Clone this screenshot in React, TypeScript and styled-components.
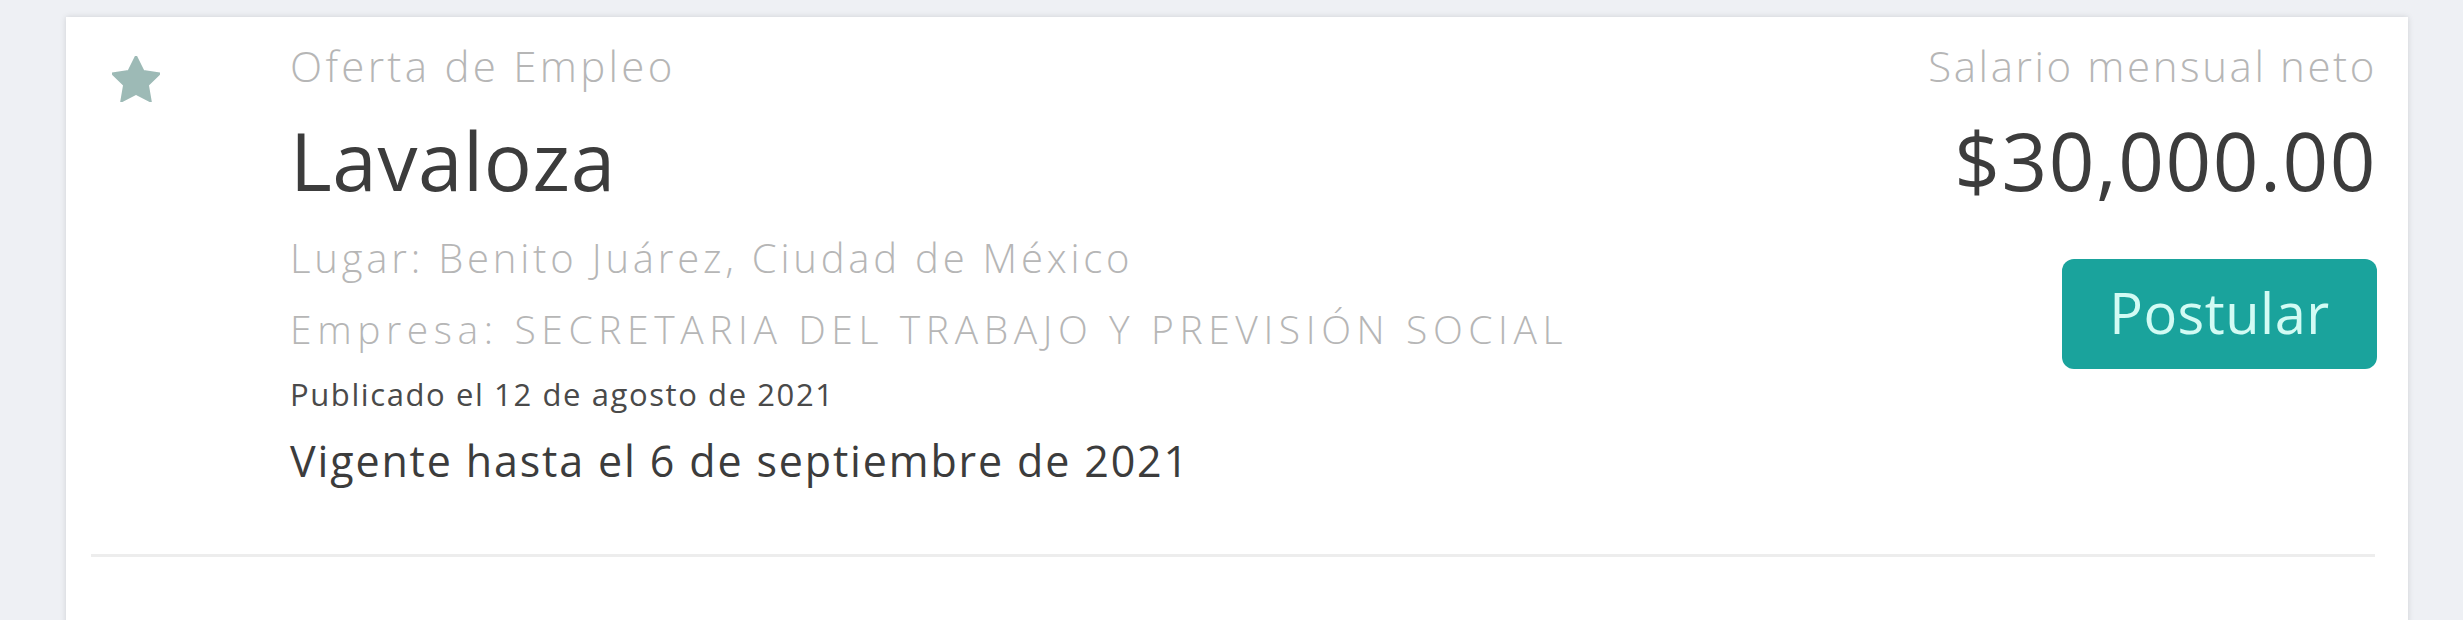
import React from "react";
import styled, { createGlobalStyle } from "styled-components";

const Global = createGlobalStyle`
  html, body {
    margin: 0;
    padding: 0;
    background: #eef0f4;
    overflow: hidden;
  }
  body {
    font-family: "Open Sans", "Noto Sans", sans-serif;
  }
`;

const Page = styled.div`
  padding: 17px 55px 0 66px;
`;

const Card = styled.div`
  background: #ffffff;
  box-shadow: 0 0 6px rgba(0, 0, 0, 0.13);
  min-height: 700px;
`;

const Item = styled.div`
  display: flex;
  align-items: flex-start;
  padding: 23px 31px 66px 46px;
`;

const StarCol = styled.div`
  width: 178px;
  flex: none;
  padding-top: 16px;
`;

const Details = styled.div`
  flex: 1;
  display: flex;
  flex-direction: column;
`;

const Line = styled.div<{ $size: number; $weight?: number; $color: string; $gap?: number; $spacing?: number }>`
  font-size: ${(p) => p.$size}px;
  font-weight: ${(p) => p.$weight ?? 400};
  color: ${(p) => p.$color};
  line-height: 1.25;
  margin-top: ${(p) => p.$gap ?? 0}px;
  letter-spacing: ${(p) => p.$spacing ?? 0}px;
  white-space: nowrap;
`;

const Side = styled.div`
  display: flex;
  flex-direction: column;
  align-items: flex-end;
`;

const ApplyButton = styled.button`
  margin-top: 49px;
  width: 315px;
  height: 110px;
  border: none;
  border-radius: 12px;
  background: #1aa39c;
  color: #d2fbf4;
  font-family: "Open Sans", "Noto Sans", sans-serif;
  font-size: 56px;
  font-weight: 400;
  letter-spacing: 0.5px;
  display: flex;
  align-items: center;
  justify-content: center;
  padding: 0 0 4px;
  cursor: pointer;
`;

const Divider = styled.div`
  height: 3px;
  background: #ededed;
  margin: 0 33px 0 25px;
`;

const Star = () => (
  <svg width="48" height="46" viewBox="2 2 20 19.2" fill="#9dbab6">
    <path d="M12 2l3.09 6.26L22 9.27l-5 4.87 1.18 6.88L12 17.77l-6.18 3.25L7 14.14 2 9.27l6.91-1.01L12 2z" strokeLinejoin="round" stroke="#9dbab6" strokeWidth="0.8" />
  </svg>
);

const LIGHT = "#b6b6b6";
const DARK = "#3c3c3c";

export default function App() {
  return (
    <>
      <Global />
      <Page>
        <Card>
          <Item>
            <StarCol>
              <Star />
            </StarCol>
            <Details>
              <Line $size={42} $weight={300} $color={LIGHT} $spacing={3.3}>
                Oferta de Empleo
              </Line>
              <Line $size={80} $color={DARK} $gap={17} $spacing={0.6}>
                Lavaloza
              </Line>
              <Line $size={40} $weight={300} $color={LIGHT} $gap={23} $spacing={3.8}>
                Lugar: Benito Juárez, Ciudad de México
              </Line>
              <Line $size={39} $weight={300} $color={LIGHT} $gap={22} $spacing={5.6}>
                Empresa: SECRETARIA DEL TRABAJO Y PREVISIÓN SOCIAL
              </Line>
              <Line $size={31} $weight={500} $color="#4a4a4a" $gap={22} $spacing={1.6}>
                Publicado el 12 de agosto de 2021
              </Line>
              <Line $size={43} $color={DARK} $gap={20} $spacing={1.85}>
                Vigente hasta el 6 de septiembre de 2021
              </Line>
            </Details>
            <Side>
              <Line $size={42} $weight={300} $color={LIGHT} $spacing={2.6}>
                Salario mensual neto
              </Line>
              <Line $size={80} $color={DARK} $gap={17} $spacing={1.5}>
                $30,000.00
              </Line>
              <ApplyButton>Postular</ApplyButton>
            </Side>
          </Item>
          <Divider />
        </Card>
      </Page>
    </>
  );
}
